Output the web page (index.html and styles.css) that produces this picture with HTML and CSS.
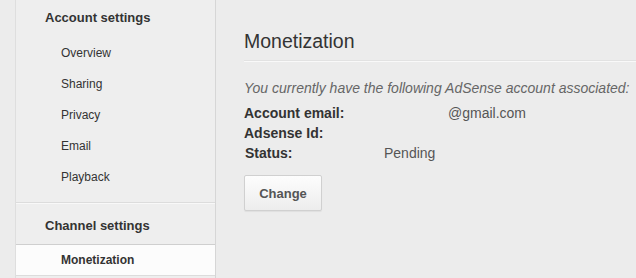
FILE: index.html
```html
<!DOCTYPE html>
<html lang="en">
<head>
  <meta charset="UTF-8" />
  <title>Monetization</title>
  <link rel="stylesheet" href="styles.css">
</head>
<body>
  <div class="page">
    <!-- Settings navigation -->
    <nav class="sidebar">
      <div class="nav-section">
        <h3>Account settings</h3>
        <ul>
          <li>Overview</li>
          <li>Sharing</li>
          <li>Privacy</li>
          <li>Email</li>
          <li>Playback</li>
        </ul>
      </div>
      <div class="nav-section channel">
        <h3>Channel settings</h3>
        <ul>
          <li class="active">Monetization</li>
        </ul>
      </div>
    </nav>

    <!-- Monetization panel -->
    <main class="content">
      <h2>Monetization</h2>
      <p class="intro">You currently have the following AdSense account associated:</p>
      <div class="details">
        <div class="row">
          <span class="label">Account email:</span>
          <span class="value"><span class="redacted"></span>@gmail.com</span>
        </div>
        <div class="row">
          <span class="label">Adsense Id:</span>
          <span class="value"></span>
        </div>
        <div class="row status">
          <span class="label">Status:</span>
          <span class="value">Pending</span>
        </div>
      </div>
      <button type="button">Change</button>
    </main>
  </div>
</body>
</html>
```

FILE: styles.css
```css
* {
  box-sizing: border-box;
}

body {
  margin: 0;
  background: #ececec;
  font-family: 'Liberation Sans', Arial, sans-serif;
  color: #333;
  overflow: hidden;
}

.page {
  display: flex;
  padding-left: 15px;
  height: 278px;
}

.sidebar {
  width: 201px;
  flex-shrink: 0;
  border-left: 1px solid #dedede;
  border-right: 1px solid #d6d6d6;
  background: #eeeeee;
}

.nav-section h3 {
  margin: 0;
  padding: 8px 0 0 29px;
  font-size: 13px;
  line-height: 20px;
  color: #333;
}

.nav-section ul {
  list-style: none;
  margin: 10px 0 0;
  padding: 0 0 9px;
}

.nav-section li {
  padding-left: 45px;
  font-size: 12px;
  line-height: 31px;
  color: #333;
}

.nav-section:first-child {
  border-bottom: 1px solid #dcdcdc;
  box-shadow: 0 1px 0 #f8f8f8;
}

.channel h3 {
  padding-top: 13px;
}

.channel ul {
  margin-top: 8px;
  padding: 0;
}

.channel li.active {
  background: #fcfcfc;
  border-top: 1px solid #cfcfcf;
  border-bottom: 1px solid #dcdcdc;
  font-weight: bold;
  line-height: 30px;
}

.content {
  flex: 1;
  padding: 29px 0 0 28px;
  white-space: nowrap;
}

.content h2 {
  margin: 0;
  padding-bottom: 8px;
  font-size: 19.5px;
  line-height: 24px;
  font-weight: normal;
  color: #333;
  border-bottom: 1px solid #f9f9f9;
  box-shadow: 0 -1px 0 #e2e2e2 inset;
}

.intro {
  margin: 17px 0 5px;
  font-size: 14px;
  line-height: 19px;
  font-style: italic;
  color: #666;
}

.row {
  display: flex;
  font-size: 14px;
  line-height: 20px;
}

.label {
  width: 140px;
  font-weight: bold;
  color: #333;
}

.status .label {
  padding-left: 1px;
}

.value {
  color: #555;
}

.redacted {
  display: inline-block;
  width: 64px;
}

button {
  margin-top: 12px;
  width: 78px;
  height: 36px;
  border: 1px solid #d0d0d0;
  border-radius: 2px;
  background: linear-gradient(#fdfdfd, #ededed);
  box-shadow: 0 1px 1px rgba(0, 0, 0, 0.06);
  font-family: inherit;
  font-size: 13px;
  font-weight: bold;
  color: #555;
}
```
